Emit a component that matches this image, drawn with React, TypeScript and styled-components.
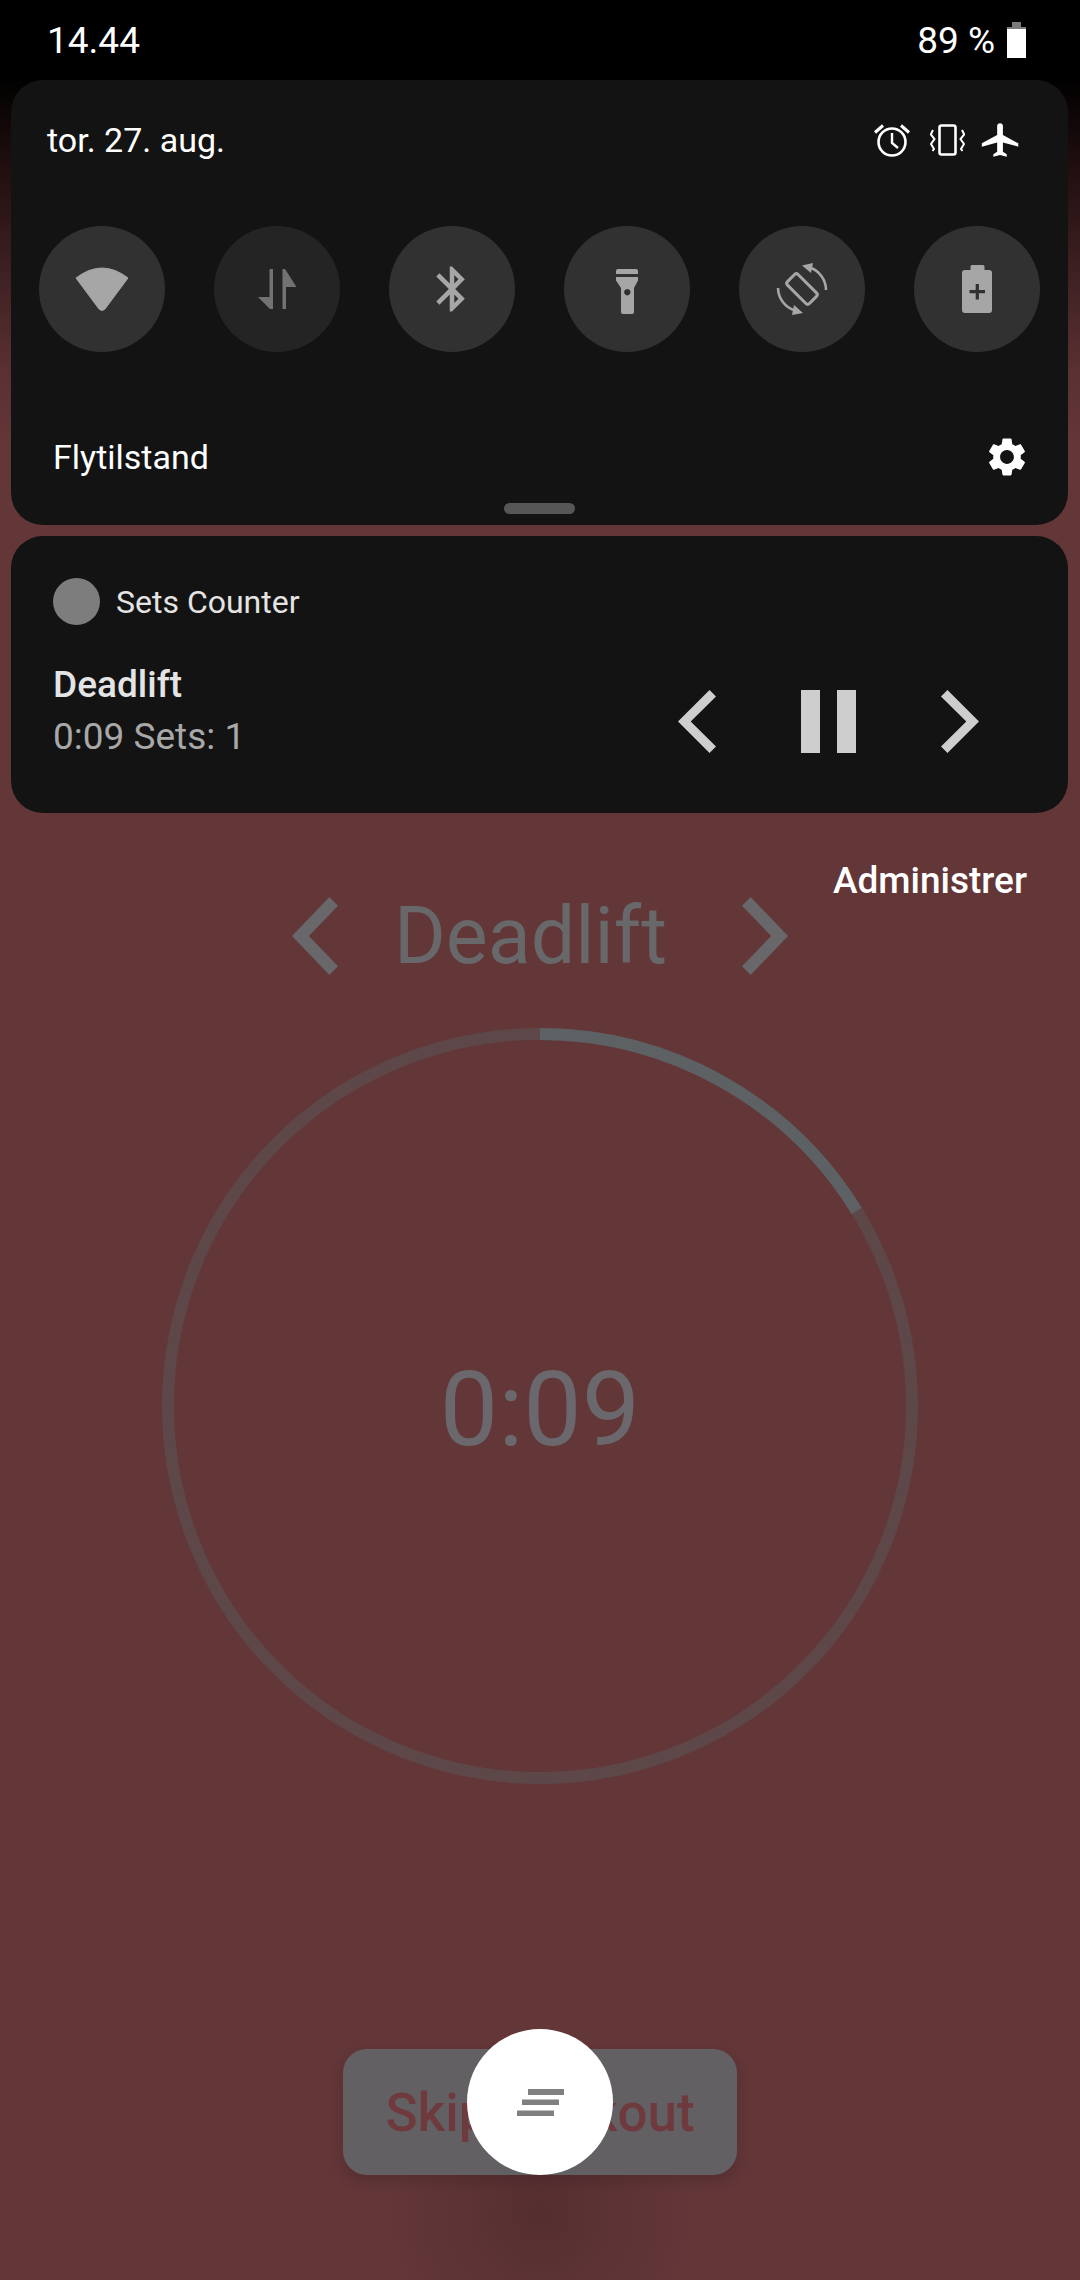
import React from "react";
import styled, { createGlobalStyle } from "styled-components";

const Global = createGlobalStyle`
  html, body { margin: 0; padding: 0; background: #633638; }
  * { box-sizing: border-box; }
`;

const Page = styled.div`
  position: relative;
  width: 1080px;
  height: 2280px;
  overflow: hidden;
  background: #633638;
  font-family: Roboto, "Liberation Sans", sans-serif;
  display: flex;
  flex-direction: column;
`;

const TopScrim = styled.div`
  position: absolute;
  left: 0;
  top: 0;
  width: 100%;
  height: 440px;
  background: linear-gradient(to bottom, #000 0, #000 76px, #220f10 170px, #3d2022 270px, #5a3032 370px, #633638 440px);
`;

const StatusBar = styled.div`
  position: relative;
  height: 80px;
  flex: none;
  padding: 0 54px 0 47px;
  display: flex;
  align-items: center;
  justify-content: space-between;
  color: #fff;
  font-size: 37px;
`;

const StatusRight = styled.div`
  display: flex;
  align-items: center;
  gap: 12px;
`;

const Panel = styled.section`
  position: relative;
  flex: none;
  margin: 0 12px 0 11px;
  background: #131313;
  border-radius: 32px;
`;

const QuickPanel = styled(Panel)`
  height: 445px;
  padding-top: 40px;
  display: flex;
  flex-direction: column;
`;

const QuickHeader = styled.div`
  height: 40px;
  padding: 0 44px 0 36px;
  display: flex;
  align-items: center;
  justify-content: space-between;
  color: #fff;
  font-size: 34px;
`;

const HeaderIcons = styled.div`
  display: flex;
  align-items: center;
  gap: 20px;
`;

const PlaneIcon = styled.svg`
  margin-left: -7px;
`;

const Tiles = styled.div`
  margin-top: 66px;
  padding: 0 28px;
  display: flex;
  gap: 49px;
`;

const Tile = styled.div<{ $off?: boolean }>`
  width: 126px;
  height: 126px;
  flex: none;
  border-radius: 50%;
  background: ${(p) => (p.$off ? "#242424" : "#313131")};
  color: ${(p) => (p.$off ? "#727272" : "#a6a6a6")};
  display: flex;
  align-items: center;
  justify-content: center;
`;

const QuickFooter = styled.div`
  margin-top: 85px;
  height: 40px;
  padding: 0 38px 0 42px;
  display: flex;
  align-items: center;
  justify-content: space-between;
  color: #fff;
  font-size: 34px;
`;

const Handle = styled.div`
  width: 71px;
  height: 11px;
  margin: 26px auto 0;
  border-radius: 6px;
  background: #565656;
`;

const MediaPanel = styled(Panel)`
  margin-top: 11px;
  height: 277px;
  padding: 42px 89px 0 42px;
`;

const AppRow = styled.div`
  display: flex;
  align-items: center;
  gap: 16px;
  color: #e4e4e4;
  font-size: 32px;
`;

const AppDot = styled.div`
  width: 47px;
  height: 47px;
  border-radius: 50%;
  background: #7d7d7d;
`;

const MediaBody = styled.div`
  margin-top: 33px;
  display: flex;
  justify-content: space-between;
`;

const MediaText = styled.div`
  padding-left: 0;
`;

const MediaTitle = styled.div`
  height: 53px;
  line-height: 53px;
  color: #e4e4e4;
  font-size: 37px;
  font-weight: 500;
`;

const MediaSub = styled.div`
  height: 52px;
  line-height: 52px;
  color: #a8a8a8;
  font-size: 37px;
`;

const MediaControls = styled.div`
  margin-top: 22px;
  display: flex;
  align-items: center;
  gap: 85px;
  color: #cecece;
`;

const ManageRow = styled.div`
  position: relative;
  margin-top: 47px;
  height: 40px;
  padding-right: 53px;
  display: flex;
  align-items: center;
  justify-content: flex-end;
  color: #fff;
  font-size: 37px;
  font-weight: 500;
`;

const TitleRow = styled.div`
  position: relative;
  margin-top: -3px;
  height: 78px;
  display: flex;
  align-items: center;
  justify-content: center;
  color: #686769;
`;

const TitleText = styled.div`
  margin: 0 75px 0 56px;
  font-size: 79px;
  line-height: 78px;
`;

const Timer = styled.div`
  position: relative;
  margin: 53px auto 0;
  width: 756px;
  height: 756px;
  display: grid;
  place-items: center;
  & > * { grid-area: 1 / 1; }
`;

const TimerText = styled.div`
  color: #6a686c;
  font-size: 104px;
  margin-top: 6px;
`;

const ActionArea = styled.div`
  position: relative;
  margin: 265px auto 0;
  width: 394px;
  height: 126px;
`;

const SkipButton = styled.div`
  position: relative;
  width: 100%;
  height: 100%;
  border-radius: 24px;
  background: #636064;
  box-shadow: 0 6px 14px rgba(0, 0, 0, 0.14);
  color: #6f3a3d;
  font-size: 53px;
  font-weight: 500;
  padding-top: 2px;
  display: flex;
  align-items: center;
  justify-content: center;
  white-space: nowrap;
`;

const Fab = styled.div`
  position: absolute;
  left: 124px;
  top: -20px;
  width: 146px;
  height: 146px;
  border-radius: 50%;
  background: #fff;
  display: flex;
  align-items: center;
  justify-content: center;
  color: #808080;
`;

const FabGlow = styled.div`
  position: absolute;
  left: 50%;
  top: 16px;
  width: 300px;
  height: 300px;
  margin-left: -150px;
  background: radial-gradient(closest-side, rgba(0, 0, 0, 0.15), rgba(0, 0, 0, 0.07) 45%, rgba(0, 0, 0, 0));
`;

const Chevron = ({ w, h, dir, t }: { w: number; h: number; dir: "l" | "r"; t: number }) => {
  const a = t * 0.72;
  const tip = t * 1.41;
  const pts =
    dir === "l"
      ? `${w - a},0 ${w},${a} ${tip},${h / 2} ${w},${h - a} ${w - a},${h} 0,${h / 2}`
      : `${a},0 0,${a} ${w - tip},${h / 2} 0,${h - a} ${a},${h} ${w},${h / 2}`;
  return (
    <svg width={w} height={h} viewBox={`0 0 ${w} ${h}`}>
      <polygon points={pts} fill="currentColor" />
    </svg>
  );
};

const Battery = () => (
  <svg width="19" height="36" viewBox="0 0 19 36">
    <path d="M5 0h9v5H5z" fill="#7a7a7a" />
    <path d="M0 5h19v2H0z" fill="#7a7a7a" />
    <path d="M0 7h19v29H0z" fill="#fff" />
  </svg>
);

const Alarm = () => (
  <svg width="36" height="34" viewBox="0 0 36 34" fill="none" stroke="#fff">
    <circle cx="18" cy="19" r="13.5" strokeWidth="2.6" />
    <path d="M18 10v10l6 5" strokeWidth="2.4" />
    <path d="M1 9.5 9 2.5M35 9.5 27 2.5" strokeWidth="3" />
  </svg>
);

const Vibrate = () => (
  <svg width="35" height="32" viewBox="0 0 35 32" fill="none" stroke="#fff">
    <rect x="9.5" y="1.5" width="16" height="29" rx="2" strokeWidth="2.6" />
    <path d="M3 6 0.8 10.5 4.5 15 1 20 4 25 2.5 27M32 6 34.2 10.5 30.5 15 34 20 31 25 32.5 27" strokeWidth="2" />
  </svg>
);

const Plane = () => (
  <PlaneIcon width="46" height="40" viewBox="0 0 24 24" preserveAspectRatio="none" fill="#fff">
    <path d="M21 16v-2l-8-5V3.5c0-.83-.67-1.5-1.5-1.5S10 2.67 10 3.500V9l-8 5v2l8-2.500V19l-2 1.500V22l3.500-1 3.500 1v-1.500L13 19v-5.500l8 2.500z" />
  </PlaneIcon>
);

const TileIcon = ({ children }: { children: React.ReactNode }) => (
  <svg width="126" height="126" viewBox="0 0 126 126" fill="currentColor">
    {children}
  </svg>
);

const Gear = () => (
  <svg width="46" height="46" viewBox="0 0 24 24" fill="#fff">
    <path d="M19.14 12.94c.04-.3.06-.61.06-.94 0-.32-.02-.64-.07-.94l2.03-1.58c.18-.14.23-.41.12-.61l-1.92-3.32c-.12-.22-.37-.29-.59-.22l-2.39.96c-.5-.38-1.03-.7-1.62-.94l-.36-2.54c-.04-.24-.24-.41-.48-.41h-3.84c-.24 0-.43.17-.47.41l-.36 2.54c-.59.24-1.13.57-1.62.94l-2.39-.96c-.22-.08-.47 0-.59.22L2.74 8.87c-.12.21-.08.47.12.61l2.03 1.58c-.05.3-.09.63-.09.94s.02.64.07.94l-2.03 1.58c-.18.14-.23.41-.12.61l1.92 3.32c.12.22.37.29.59.22l2.39-.96c.5.38 1.03.7 1.62.94l.36 2.54c.05.24.24.41.48.41h3.84c.24 0 .44-.17.47-.41l.36-2.54c.59-.24 1.13-.56 1.62-.94l2.39.96c.22.08.47 0 .59-.22l1.92-3.32c.12-.22.07-.47-.12-.61l-2.01-1.58zM12 15.6c-1.98 0-3.6-1.62-3.6-3.6s1.62-3.6 3.6-3.6 3.6 1.62 3.6 3.6-1.62 3.6-3.6 3.6z" />
  </svg>
);

export default function App() {
  const r = 372;
  const c = 2 * Math.PI * r;
  const progress = 0.162;
  return (
    <Page>
      <Global />
      <TopScrim />
      <StatusBar>
        <span>14.44</span>
        <StatusRight>
          <span>89 %</span>
          <Battery />
        </StatusRight>
      </StatusBar>
      <QuickPanel>
        <QuickHeader>
          <span>tor. 27. aug.</span>
          <HeaderIcons>
            <Alarm />
            <Vibrate />
            <Plane />
          </HeaderIcons>
        </QuickHeader>
        <Tiles>
          <Tile>
            <TileIcon>
              <path d="M37 52Q63 32 89 52L66 83Q63 86 60 83Z" stroke="currentColor" strokeWidth="1" strokeLinejoin="round" />
            </TileIcon>
          </Tile>
          <Tile $off>
            <TileIcon>
              <path d="M59 43H55.5V71H44L56 83H59Z" />
              <path d="M68.5 83H72V61H82.5L71 43H68.5Z" />
            </TileIcon>
          </Tile>
          <Tile>
            <svg width="54" height="54" viewBox="0 0 24 24" fill="currentColor">
              <path d="M17.71 7.71L12 2h-1v7.59L6.41 5 5 6.41 10.59 12 5 17.59 6.41 19 11 14.41V22h1l5.71-5.71-4.3-4.29 4.3-4.29zM13 5.83l1.88 1.88L13 9.59V5.83zm1.88 10.46L13 18.17v-3.76l1.88 1.88z" />
            </svg>
          </Tile>
          <Tile>
            <TileIcon>
              <path d="M54 43H72a2 2 0 0 1 2 2V48H52V45a2 2 0 0 1 2-2Z" />
              <path fillRule="evenodd" d="M52 51H74V54.5L70 62V86a2 2 0 0 1-2 2H59a2 2 0 0 1-2-2V62L52 54.5ZM63.3 63a3.2 3.2 0 1 0 .01 0Z" />
            </TileIcon>
          </Tile>
          <Tile>
            <TileIcon>
              <rect x="55.5" y="47.500" width="15" height="31" rx="2.500" transform="rotate(-45 63 63)" fill="none" stroke="currentColor" strokeWidth="3" />
              <path d="M71 41.500A24 24 0 0 1 87 64" fill="none" stroke="currentColor" strokeWidth="2.600" />
              <path d="M56 84.500A24 24 0 0 1 39 62" fill="none" stroke="currentColor" strokeWidth="2.600" />
              <path d="M63 39.500 L74 37 L72 47 Z" />
              <path d="M64 87 L53 89 L55 79 Z" />
            </TileIcon>
          </Tile>
          <Tile>
            <TileIcon>
              <path d="M58 39H69a1.500 1.500 0 0 1 1.500 1.500V44H75a3 3 0 0 1 3 3V84a3 3 0 0 1-3 3H51a3 3 0 0 1-3-3V47a3 3 0 0 1 3-3H56.500V40.500a1.500 1.500 0 0 1 1.500-1.500Z" />
              <path d="M55.500 65.700H71M63.300 58V73.500" stroke="#313131" strokeWidth="3.200" fill="none" />
            </TileIcon>
          </Tile>
        </Tiles>
        <QuickFooter>
          <span>Flytilstand</span>
          <Gear />
        </QuickFooter>
        <Handle />
      </QuickPanel>
      <MediaPanel>
        <AppRow>
          <AppDot />
          <span>Sets Counter</span>
        </AppRow>
        <MediaBody>
          <MediaText>
            <MediaTitle>Deadlift</MediaTitle>
            <MediaSub>0:09 Sets: 1</MediaSub>
          </MediaText>
          <MediaControls>
            <Chevron w={38} h={63} dir="l" t={9} />
            <svg width="55" height="63" viewBox="0 0 55 63" fill="currentColor">
              <rect x="0" width="19" height="63" />
              <rect x="36" width="19" height="63" />
            </svg>
            <Chevron w={38} h={63} dir="r" t={9} />
          </MediaControls>
        </MediaBody>
      </MediaPanel>
      <ManageRow>Administrer</ManageRow>
      <TitleRow>
        <Chevron w={46} h={78} dir="l" t={12} />
        <TitleText>Deadlift</TitleText>
        <Chevron w={46} h={78} dir="r" t={12} />
      </TitleRow>
      <Timer>
        <svg width="756" height="756" viewBox="0 0 756 756" fill="none">
          <circle cx="378" cy="378" r={r} stroke="#5d4749" strokeWidth="12" />
          <circle
            cx="378"
            cy="378"
            r={r}
            stroke="#5e6164"
            strokeWidth="12"
            strokeDasharray={`${c * progress} ${c}`}
            transform="rotate(-90 378 378)"
          />
        </svg>
        <TimerText>0:09</TimerText>
      </Timer>
      <ActionArea>
        <FabGlow />
        <SkipButton>Skip workout</SkipButton>
        <Fab>
          <svg width="60" height="40" viewBox="0 0 60 40" fill="currentColor">
            <rect x="18" y="7" width="36" height="6" />
            <rect x="12" y="17.500" width="37" height="5.500" />
            <rect x="7" y="28.500" width="37" height="5.500" />
          </svg>
        </Fab>
      </ActionArea>
    </Page>
  );
}
